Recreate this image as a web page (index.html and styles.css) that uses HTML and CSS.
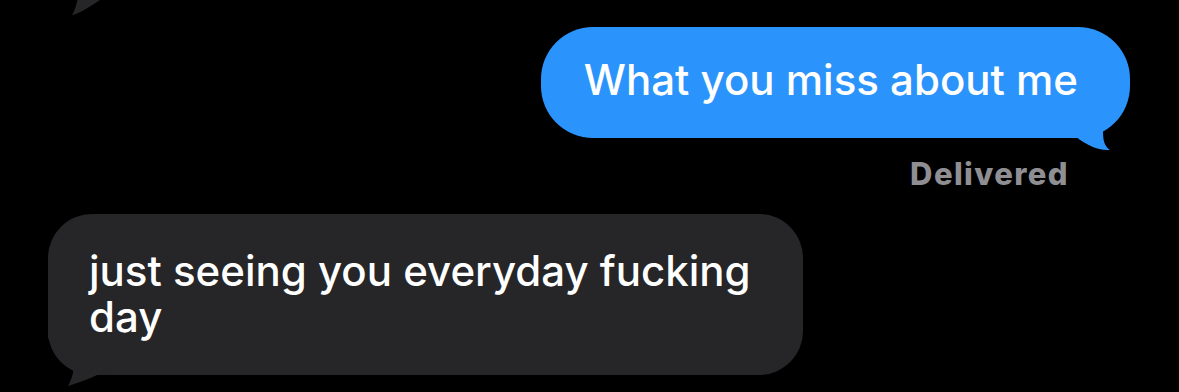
FILE: index.html
```html
<!DOCTYPE html>
<html lang="en">
<head>
<meta charset="utf-8">
<title>Messages</title>
<link rel="stylesheet" href="styles.css">
</head>
<body>
<div class="thread">
  <div class="prev-tail">
    <svg width="40" height="16" viewBox="0 0 40 16"><path d="M10 -4 L32 -4 L32 0 C24 5 16 11 4 15.5 C7 10 9 4 10 -4 Z" fill="#262628"/></svg>
  </div>

  <div class="row sent">
    <div class="bubble bubble-sent">
      What you miss about me
      <svg class="tail tail-sent" width="60" height="60" viewBox="0 0 60 60"><path d="M0 0 L57 0 C48 12 33 20 33 35 C33 45 34 51 40 55 C27 56 12 48 2 38 L0 38 Z" fill="#2b94fc"/></svg>
    </div>
  </div>
  <div class="status">Delivered</div>

  <div class="row received">
    <div class="bubble bubble-recv">
      just seeing you everyday fucking day
      <svg class="tail tail-recv" width="70" height="60" viewBox="0 0 70 60"><path d="M0 0 L62 0 L62 36 C49 42 37 48 20 53 C24 45 26 40 25 32 C24 22 8 15 0 5 Z" fill="#262628"/></svg>
    </div>
  </div>
</div>
</body>
</html>
```

FILE: styles.css
```css
html, body {
  margin: 0;
  padding: 0;
  background: #000;
}
body {
  width: 1179px;
  height: 392px;
  overflow: hidden;
  font-family: Inter, "Noto Sans", sans-serif;
  -webkit-font-smoothing: antialiased;
}
.thread {
  display: flex;
  flex-direction: column;
}
.prev-tail {
  height: 16px;
  padding-left: 68px;
  line-height: 0;
}
.prev-tail svg {
  overflow: visible;
}
.row {
  display: flex;
}
.sent {
  justify-content: flex-end;
  padding-right: 49px;
  margin-top: 11px;
}
.received {
  justify-content: flex-start;
  padding-left: 48px;
  margin-top: 23px;
}
.bubble {
  position: relative;
  color: #fff;
  font-size: 42px;
  font-weight: 520;
  letter-spacing: 0;
}
.bubble-sent {
  background: #2b94fc;
  border-radius: 52px;
  padding: 28px 52px 34px 43px;
  line-height: 49px;
  white-space: nowrap;
}
.bubble-recv {
  background: #262628;
  border-radius: 44px;
  width: 755px;
  box-sizing: border-box;
  padding: 34px 44px 35px 41px;
  line-height: 46px;
}
.tail {
  position: absolute;
  overflow: visible;
}
.tail-sent {
  right: 0;
  bottom: -17px;
}
.tail-recv {
  left: 0;
  bottom: -18px;
  height: 60px;
}
.status {
  align-self: flex-end;
  margin-right: 110px;
  margin-top: 18px;
  color: #8e8e93;
  font-size: 31px;
  font-weight: 800;
  letter-spacing: 1.4px;
  line-height: 35px;
}
```
